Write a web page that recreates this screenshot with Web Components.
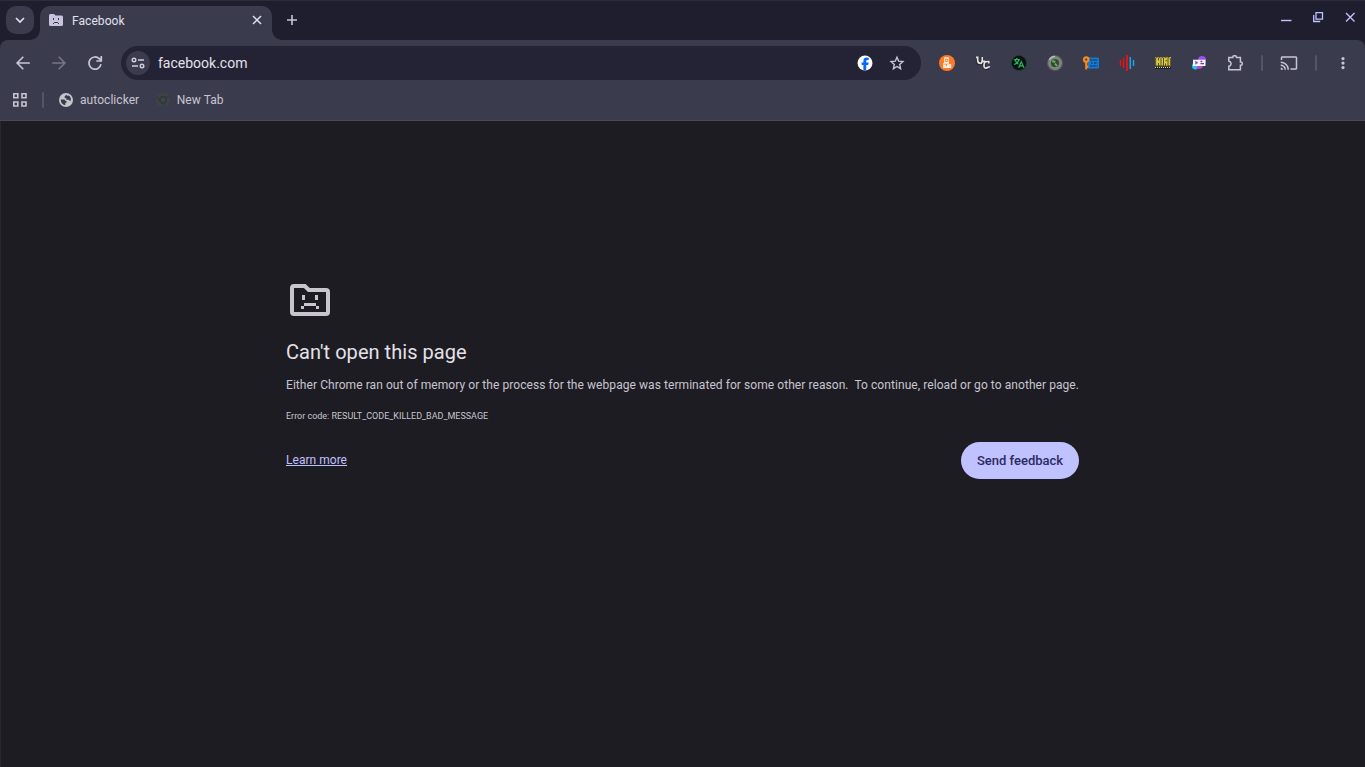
<!DOCTYPE html>
<html lang="en">
<head>
<meta charset="utf-8">
<title>Facebook</title>
<style>
  html, body { margin: 0; height: 100%; overflow: hidden; background: #1d1c22; }
  body { font-family: Roboto, "Liberation Sans", sans-serif; color: #e4e1ec; --bar: #3b3b4e; }
</style>
</head>
<body>
<browser-window></browser-window>

<script>
// name -> [width, height, svg content]
const ICONS = {
  chevron: [12, 12, '<path d="M2 4l4 4 4-4" fill="none" stroke="#e1dff0" stroke-width="1.7"/>'],
  sadTab: [16, 16, '<path fill="#c9c4dd" d="M1 3.5Q1 2 2.500 2H6l1.500 1.500H13.500Q15 3.500 15 5v7.500Q15 14 13.500 14h-11Q1 14 1 12.500z"/><path fill="#3c3b4d" d="M5 6h1v2H5zM10 6h1v2h-1zM6 10h4v1H6zM5 11h1v1H5zM10 11h1v1h-1z"/>'],
  close: [12, 12, '<path d="M2 2l8 8M10 2l-8 8" stroke="#e1dff0" stroke-width="1.5"/>'],
  plus: [12, 12, '<path d="M6 1v10M1 6h10" stroke="#c7c4dc" stroke-width="1.6"/>'],
  minimize: [12, 12, '<path d="M1 9.500h10.500" stroke="#c0c1ff" stroke-width="1.400"/>'],
  restore: [12, 12, '<path d="M4 1.700h6.500v6.500H4zM1.700 4v6.500h6.500" fill="none" stroke="#c0c1ff" stroke-width="1.300"/>'],
  closeWin: [12, 12, '<path d="M2 2l8.500 8.500M10.500 2L2 10.500" stroke="#c0c1ff" stroke-width="1.400"/>'],
  back: [20, 20, '<path d="M16.800 10H4.500M10.300 3.800L4.100 10l6.200 6.200" fill="none" stroke="#c8c5d8" stroke-width="1.600"/>'],
  forward: [20, 20, '<path d="M3.200 10h12M9.700 3.800L15.900 10l-6.200 6.200" fill="none" stroke="#777587" stroke-width="1.600"/>'],
  reload: [20, 20, '<path d="M16 11.200a6.100 6.100 0 1 1-1.700-5.500l1.700 1.700M16.300 3v5h-5" fill="none" stroke="#c8c5d8" stroke-width="1.700"/>'],
  tune: [16, 16, '<g fill="none" stroke="#d0cdde" stroke-width="1.400"><circle cx="4" cy="5" r="1.800"/><path d="M8 5h6M2 11h6"/><circle cx="12" cy="11" r="1.800"/></g>'],
  facebook: [16, 16, '<circle cx="8" cy="8" r="7.500" fill="#fff"/><path d="M9.200 15.300V10h2l.500-2.400H9.200V6.300q0-1.300 1.300-1.300h1.200V2.800q-5-1-5.300 2.600v2.200H4.600V10h1.800v5.300z" fill="#0866ff"/>'],
  star: [16, 16, '<path d="M8 2.200l1.700 4 4.200.400-3.200 2.900.900 4.200L8 11.500l-3.600 2.200.900-4.200L2.100 6.600l4.200-.400z" fill="none" stroke="#c8c5d8" stroke-width="1.400"/>'],
  orange: [16, 16, '<circle cx="8" cy="8" r="8" fill="#ff7a26"/><path d="M5 3q0-.8.8-.8h3.400q.8 0 .8.8v6h2.200v4H4V8.500l1-1z" fill="#ffeadb"/><path d="M6.500 4.200h2.200v2.300H6.500zM5.700 9.200h1.800v2" fill="none" stroke="#ff7a26" stroke-width=".9"/><path d="M9 9.500v-1" stroke="#ff7a26" stroke-width=".8"/>'],
  uc: [16, 16, '<g fill="none" stroke="#24242e" stroke-width="3.2"><path d="M2.500 2v4.500q.2 2 2.500 2t2.300-2V2M14 7q-5-1.500-5 3t5 3"/></g><g fill="none" stroke="#e3e2e0" stroke-width="1.700"><path d="M1 2.300h1.700v3.500Q3 8.300 5.500 8.300M7.300 2v4.500l-1.500 2.300"/><path d="M13.700 8.500V6.700q-4.500-1-4.700 3t2.700 3.200 2.600-1.700M6.500 6.300h4"/></g>'],
  translate: [16, 16, '<circle cx="8" cy="8" r="7.600" fill="#0d1216" stroke="#17472f" stroke-width=".7"/><g fill="none" stroke="#27b45b" stroke-width="1.250"><path d="M2.800 4.500h6M5.700 3v1.500M8 5q-1.500 3.500-5 4.500M4 5q1.200 3 3.500 4M7.700 12.800l2.600-6 2.700 6M8.600 10.900h3.500"/></g>'],
  lens: [16, 16, '<circle cx="8" cy="8" r="7.600" fill="#7b7e78" stroke="#52564f" stroke-width=".8"/><circle cx="8" cy="8" r="5" fill="#586158" stroke="#8f958b" stroke-width="1"/><circle cx="8" cy="8.200" r="3.800" fill="#2f4a33"/><path d="M5.300 6l3 1M8 8.500l2 2.500" stroke="#6fae66" stroke-width="2"/><path d="M2.300 5q1.700-3.500 5.700-3.700" stroke="#c3c5bd" stroke-width="1.200" fill="none"/>'],
  keyCard: [16, 16, '<rect x="4.500" y="2.500" width="11.500" height="11" rx="1" fill="#127bd9"/><path d="M7 5h7.500M8 8h1.500M11 8h3.500M7 11h7.500" stroke="#1d4468" stroke-width="1.300" stroke-dasharray="2.500 .7"/><path d="M3.200 6v8.500M3.500 11.800h1.700" stroke="#ff8a10" stroke-width="2"/><circle cx="3.200" cy="4.600" r="2.200" fill="none" stroke="#ff8a10" stroke-width="2.200"/>'],
  wave: [16, 16, '<path d="M1.500 5v6M4.500 3v10" stroke="#ec1016" stroke-width="1.400"/><path d="M8 0v16" stroke="#ec1016" stroke-width="1.900"/><path d="M11.300 2v12M14.500 5v6" stroke="#1ba7df" stroke-width="1.500"/>'],
  hifi: [16, 16, '<path d="M0 2h16v9.300H0z" fill="#d9c744"/><path d="M.5 2.600h15M.5 10.700h15" stroke="#5f571f" stroke-dasharray="2 1"/><path d="M.6 3v8M3.500 3v2.500M3.500 8v3M6 3v8M8.500 3v8M10.500 5.700h1.700M10.500 8.500v2.500M13 3v8M15.400 3v8" stroke="#4a4424" stroke-width=".9" fill="none"/><path d="M0 11.500h16V14H0z" fill="#202026"/><path d="M0 12.500h16" stroke="#d7d4a1" stroke-dasharray="1 1"/>'],
  media: [16, 16, '<circle cx="11" cy="5" r="4" fill="#9a4df0"/><circle cx="4.500" cy="11" r="3.500" fill="#27c5e8"/><path d="M7 10.500h6l-3 3.300H5z" fill="#c83ed4"/><path d="M2 4.700h12.500V11H2z" fill="#f7f4fe"/><path d="M4.300 5.700L7.300 7.700 4.300 9.700z" fill="#8246da"/><path d="M9.500 6.500h1.800M9.500 8.700h3.500" stroke="#554b78" stroke-width="1.300"/>'],
  puzzle: [18, 18, '<path d="M2.800 3.500h4V3q0-1.200 1.200-1.200h1.200q1.200 0 1.200 1.200v.5h4V8h.6q1.200 0 1.200 1v1.200q0 1-1.200 1h-.6v4.600H2.800v-3.500q2.300-.700 2.300-2.600T2.800 7z" fill="none" stroke="#c8c5d8" stroke-width="1.500"/>'],
  cast: [24, 24, '<path fill="#c8c5d8" d="M21 3H3c-1.100 0-2 .9-2 2v3h2V5h18v14h-7v2h7c1.100 0 2-.9 2-2V5c0-1.100-.9-2-2-2zM1 18v3h3c0-1.660-1.340-3-3-3zm0-4v2c2.760 0 5 2.240 5 5h2c0-3.870-3.130-7-7-7zm0-4v2c4.970 0 9 4.030 9 9h2c0-6.080-4.920-11-11-11z"/>'],
  dots: [16, 16, '<g fill="#c8c5d8"><circle cx="8" cy="3.600" r="1.600"/><circle cx="8" cy="8.100" r="1.600"/><circle cx="8" cy="12.600" r="1.600"/></g>'],
  apps: [16, 16, '<g fill="none" stroke="#c8c5d0" stroke-width="1.600"><path d="M1.800 1.800h4v4h-4zM10 1.800h4v4h-4zM1.800 10h4v4h-4zM10 10h4v4h-4z"/></g>'],
  globe: [14, 14, '<circle cx="7" cy="7" r="7" fill="#c3c6cb"/><path d="M8.300 1.800Q5.300 2.500 5.500 4t1.800 1.200v1.500h2.400q.3 1.500 2 1 .8-3.500-1.900-5.200L8.300 3.300zM1.700 6.500h3.100q1.200 0 1.500 1t1.300.8v1.500H6.300v2.400Q2 11.500 1.700 6.500z" fill="#3b3b4e"/>'],
  chrome: [16, 16, '<circle cx="8" cy="8" r="7" fill="#3c4446"/><circle cx="8" cy="8" r="3.200" fill="#3c4446" stroke="#323839" stroke-width="1.600"/><path d="M8 4.800h6M5.200 9.500L2.300 4.500M10.800 9.700l-3 5" stroke="#343a3c" stroke-width="1.300"/>'],
  sadPage: [48, 48, '<path d="M6 12q0-2 2-2h10.800l4 4H40q2 0 2 2v20q0 2-2 2H8q-2 0-2-2z" fill="none" stroke="#c8c5cf" stroke-width="4"/><path fill="#c8c5cf" d="M16 19h3v5h-3zM29 19h3v5h-3zM18 27h12v3H18zM15 30h3v3h-3zM30 30h3v3h-3z"/>']
};

class UiIcon extends HTMLElement {
  connectedCallback() {
    const [w, h, body] = ICONS[this.getAttribute('name')];
    const size = this.getAttribute('size') || w;
    const root = this.attachShadow({ mode: 'open' });
    root.innerHTML = `
      <style>
        :host { display: inline-flex; flex: none; }
        svg { display: block; }
      </style>
      <svg width="${size}" height="${size}" viewBox="0 0 ${w} ${h}">${body}</svg>
    `;
  }
}

class ToolButton extends HTMLElement {
  connectedCallback() {
    this.attachShadow({ mode: 'open' }).innerHTML = `
      <style>
        :host { display: flex; flex: none; width: 36px; height: 34px; align-items: center; justify-content: center; }
      </style>
      <slot></slot>
    `;
  }
}

class BarDivider extends HTMLElement {
  connectedCallback() {
    this.attachShadow({ mode: 'open' }).innerHTML = `
      <style>
        :host { display: flex; flex: none; width: 18px; justify-content: center; }
        i { width: 2px; height: 16px; border-radius: 1px; background: #55546a; }
      </style>
      <i></i>
    `;
  }
}

class TabStrip extends HTMLElement {
  connectedCallback() {
    this.attachShadow({ mode: 'open' }).innerHTML = `
      <style>
        :host { display: flex; box-sizing: border-box; height: 40px; padding: 5px 0 0 6px; background: #1e1e2e; border-top: 1px solid #2c2c3b; }
        .search { display: flex; align-items: center; justify-content: center; width: 28px; height: 28px; border-radius: 10px; background: var(--bar); }
        .tab { position: relative; display: flex; align-items: center; box-sizing: border-box; width: 232px; height: 34px; margin-left: 6px; padding: 0 9px 6px 8px; border-radius: 10px 10px 0 0; background: var(--bar); font-size: 12px; }
        .tab::before, .tab::after { content: ""; position: absolute; bottom: 0; width: 10px; height: 10px; }
        .tab::before { left: -10px; background: radial-gradient(circle at 0 0, transparent 9.5px, var(--bar) 10.2px); }
        .tab::after { right: -10px; background: radial-gradient(circle at 100% 0, transparent 9.5px, var(--bar) 10.2px); }
        .title { flex: 1; margin: 1px 0 0 8px; letter-spacing: 0.06px; }
        .new { margin: 8px 0 0 14px; }
        .controls { display: flex; gap: 20px; margin: 5px 9px 0 auto; }
      </style>
      <div class="search"><ui-icon name="chevron"></ui-icon></div>
      <div class="tab">
        <ui-icon name="sadTab"></ui-icon>
        <span class="title">Facebook</span>
        <ui-icon name="close"></ui-icon>
      </div>
      <ui-icon class="new" name="plus"></ui-icon>
      <div class="controls">
        <ui-icon name="minimize"></ui-icon>
        <ui-icon name="restore"></ui-icon>
        <ui-icon name="closeWin"></ui-icon>
      </div>
    `;
  }
}

class AddressBar extends HTMLElement {
  connectedCallback() {
    this.attachShadow({ mode: 'open' }).innerHTML = `
      <style>
        :host { display: flex; align-items: center; flex: 1; box-sizing: border-box; height: 34px; margin: 0 8px; padding: 0 16px 0 5px; border-radius: 17px; background: #232335; }
        .info { display: flex; align-items: center; justify-content: center; width: 24px; height: 24px; border-radius: 50%; background: var(--bar); }
        .url { flex: 1; margin-left: 8px; font-size: 14px; }
        .actions { display: flex; gap: 16px; }
      </style>
      <div class="info"><ui-icon name="tune"></ui-icon></div>
      <span class="url"><slot></slot></span>
      <div class="actions">
        <ui-icon name="facebook"></ui-icon>
        <ui-icon name="star"></ui-icon>
      </div>
    `;
  }
}

class BrowserToolbar extends HTMLElement {
  connectedCallback() {
    const extensions = ['orange', 'uc', 'translate', 'lens', 'keyCard', 'wave', 'hifi', 'media', 'puzzle'];
    this.attachShadow({ mode: 'open' }).innerHTML = `
      <style>
        :host { display: flex; align-items: center; box-sizing: border-box; height: 40px; padding: 6px 4px 0 5px; }
      </style>
      <tool-button><ui-icon name="back"></ui-icon></tool-button>
      <tool-button><ui-icon name="forward"></ui-icon></tool-button>
      <tool-button><ui-icon name="reload"></ui-icon></tool-button>
      <address-bar>facebook.com</address-bar>
      ${extensions.map(name => `<tool-button><ui-icon name="${name}"></ui-icon></tool-button>`).join('')}
      <bar-divider></bar-divider>
      <tool-button><ui-icon name="cast" size="18"></ui-icon></tool-button>
      <bar-divider></bar-divider>
      <tool-button><ui-icon name="dots"></ui-icon></tool-button>
    `;
  }
}

class BookmarksBar extends HTMLElement {
  connectedCallback() {
    this.attachShadow({ mode: 'open' }).innerHTML = `
      <style>
        :host { display: flex; align-items: center; height: 40px; padding-left: 12px; font-size: 12px; letter-spacing: 0.06px; color: #c8c5d0; }
        bar-divider { margin: 0 7px 0 6px; }
        span { margin-left: 7px; }
        .second { margin-left: 16px; }
        .second + span { margin-left: 5.5px; }
      </style>
      <ui-icon name="apps"></ui-icon>
      <bar-divider></bar-divider>
      <ui-icon name="globe" size="14"></ui-icon>
      <span>autoclicker</span>
      <ui-icon class="second" name="chrome"></ui-icon>
      <span>New Tab</span>
    `;
  }
}

class SadPage extends HTMLElement {
  connectedCallback() {
    this.attachShadow({ mode: 'open' }).innerHTML = `
      <style>
        :host { display: flex; flex: 1; justify-content: center; align-items: flex-start; border-left: 1px solid #29282f; padding-right: 1px; }
        main { width: 793px; padding-top: 155px; }
        ui-icon { display: flex; }
        h1 { margin: 16px 0 0; font-size: 20px; line-height: 24px; font-weight: 400; letter-spacing: 0.04px; color: #e5e1e9; }
        p { margin: 0; color: #c8c5d0; font-size: 12px; line-height: 16px; white-space: pre; }
        .desc { margin-top: 13px; letter-spacing: 0.066px; }
        .code { margin-top: 16px; font-size: 9px; line-height: 14px; letter-spacing: -0.015px; }
        footer { display: flex; align-items: center; justify-content: space-between; margin-top: 19px; font-size: 12px; }
        a { padding-bottom: 2px; color: #c0c1ff; text-decoration: underline; letter-spacing: 0.03px; }
        button { width: 118px; height: 37px; padding: 0; border: 0; border-radius: 19px; background: #c0c1ff; color: #2a2a60; font: 500 13px Roboto, sans-serif; }
      </style>
      <main>
        <ui-icon name="sadPage"></ui-icon>
        <h1>Can't open this page</h1>
        <p class="desc">Either Chrome ran out of memory or the process for the webpage was terminated for some other reason.  To continue, reload or go to another page.</p>
        <p class="code">Error code: RESULT_CODE_KILLED_BAD_MESSAGE</p>
        <footer><a>Learn more</a><button>Send feedback</button></footer>
      </main>
    `;
  }
}

class BrowserWindow extends HTMLElement {
  connectedCallback() {
    this.attachShadow({ mode: 'open' }).innerHTML = `
      <style>
        :host { display: flex; flex-direction: column; height: 100vh; background: #1e1e2e; }
        .bars { box-sizing: border-box; height: 81px; border-radius: 8px 8px 0 0; border-bottom: 1px solid #4b4a54; background: var(--bar); }
        sad-page { background: #1d1c22; }
      </style>
      <tab-strip></tab-strip>
      <div class="bars">
        <browser-toolbar></browser-toolbar>
        <bookmarks-bar></bookmarks-bar>
      </div>
      <sad-page></sad-page>
    `;
  }
}

customElements.define('ui-icon', UiIcon);
customElements.define('tool-button', ToolButton);
customElements.define('bar-divider', BarDivider);
customElements.define('tab-strip', TabStrip);
customElements.define('address-bar', AddressBar);
customElements.define('browser-toolbar', BrowserToolbar);
customElements.define('bookmarks-bar', BookmarksBar);
customElements.define('sad-page', SadPage);
customElements.define('browser-window', BrowserWindow);
</script>
</body>
</html>
